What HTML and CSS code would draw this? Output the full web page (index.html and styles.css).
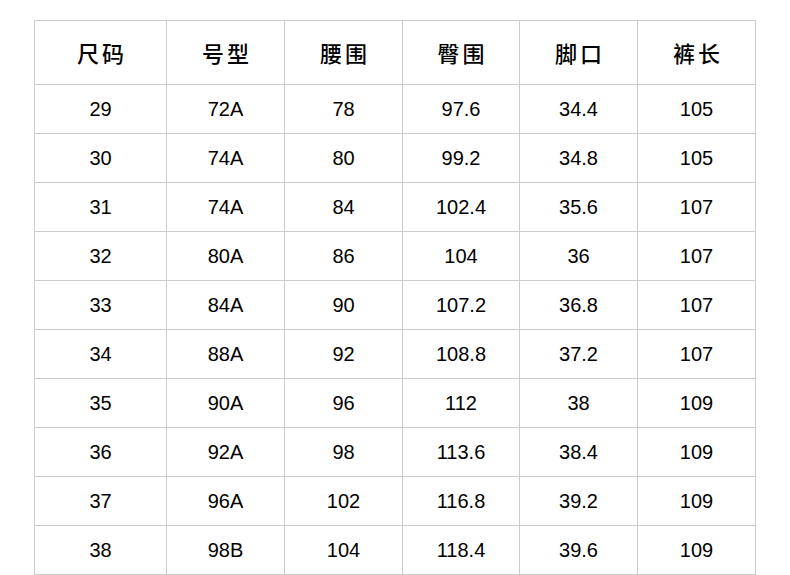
FILE: index.html
```html
<!DOCTYPE html>
<html lang="zh">
<head>
<meta charset="utf-8">
<link rel="stylesheet" href="styles.css">
</head>
<body>
<div class="wrap">
<table class="size-table">
<colgroup>
<col class="c1"><col class="c"><col class="c"><col class="c3"><col class="c"><col class="c">
</colgroup>
<thead>
<tr><th>尺码</th><th>号型</th><th>腰围</th><th>臀围</th><th>脚口</th><th>裤长</th></tr>
</thead>
<tbody>
<tr><td>29</td><td>72A</td><td>78</td><td>97.6</td><td>34.4</td><td>105</td></tr>
<tr><td>30</td><td>74A</td><td>80</td><td>99.2</td><td>34.8</td><td>105</td></tr>
<tr><td>31</td><td>74A</td><td>84</td><td>102.4</td><td>35.6</td><td>107</td></tr>
<tr><td>32</td><td>80A</td><td>86</td><td>104</td><td>36</td><td>107</td></tr>
<tr><td>33</td><td>84A</td><td>90</td><td>107.2</td><td>36.8</td><td>107</td></tr>
<tr><td>34</td><td>88A</td><td>92</td><td>108.8</td><td>37.2</td><td>107</td></tr>
<tr><td>35</td><td>90A</td><td>96</td><td>112</td><td>38</td><td>109</td></tr>
<tr><td>36</td><td>92A</td><td>98</td><td>113.6</td><td>38.4</td><td>109</td></tr>
<tr><td>37</td><td>96A</td><td>102</td><td>116.8</td><td>39.2</td><td>109</td></tr>
<tr><td>38</td><td>98B</td><td>104</td><td>118.4</td><td>39.6</td><td>109</td></tr>
</tbody>
</table>
</div>
</body>
</html>
```
FILE: styles.css
```css
html, body {
  margin: 0;
  padding: 0;
  background: #fff;
}
.wrap {
  padding: 20px 0 0 34px;
}
.size-table {
  border-collapse: collapse;
  table-layout: fixed;
  width: 722px;
  color: #000;
  font-family: "Liberation Sans", "Noto Sans CJK SC", sans-serif;
}
.c1 { width: 132px; }
.c { width: 118px; }
.c3 { width: 117px; }
.size-table th,
.size-table td {
  border: 1px solid #cccccc;
  text-align: center;
  padding: 0;
}
.size-table th {
  height: 61px;
  padding-bottom: 2px;
  font-family: "Noto Sans CJK SC", sans-serif;
  font-size: 22px;
  font-weight: 500;
  letter-spacing: 3px;
  text-indent: 3px;
}
.size-table td {
  height: 48px;
  font-size: 20px;
  line-height: 20px;
}
```
